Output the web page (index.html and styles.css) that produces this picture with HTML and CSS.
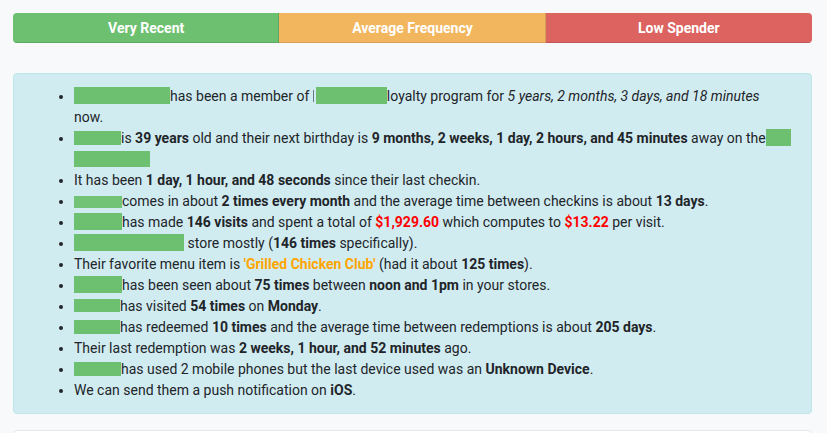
FILE: index.html
```html
<!DOCTYPE html>
<html lang="en">
<head>
<meta charset="utf-8">
<title>Customer Insights</title>
<link rel="stylesheet" href="styles.css">
</head>
<body>
<div class="page">
  <div class="progress">
    <div class="seg seg-green">Very Recent</div>
    <div class="seg seg-orange">Average Frequency</div>
    <div class="seg seg-red">Low Spender</div>
  </div>

  <div class="alert">
    <ul class="facts">
      <li><span class="r r96 h17"></span>has been a member of <span class="rem"></span><span class="r r71 h17"></span>loyalty program for <em>5 years, 2 months, 3 days, and 18 minutes</em> now.</li>
      <li><span class="r r47 h14"></span>is <b>39 years</b> old and their next birthday is <b>9 months, 2 weeks, 1 day, 2 hours, and 45 minutes</b> away on the<span class="r r25 h17"></span> <span class="r r76 h16"></span></li>
      <li>It has been <b>1 day, 1 hour, and 48 seconds</b> since their last checkin.</li>
      <li><span class="r r48 h12 light"></span>comes in about <b>2 times every month</b> and the average time between checkins is about <b>13 days</b>.</li>
      <li><span class="r r48 h17"></span>has made <b>146 visits</b> and spent a total of <b class="red">$1,929.60</b> which computes to <b class="red">$13.22</b> per visit.</li>
      <li><span class="r r110 h17"></span> store mostly (<b>146 times</b> specifically).</li>
      <li>Their favorite menu item is <b class="orange">'Grilled Chicken Club'</b> (had it about <b>125 times</b>).</li>
      <li><span class="r r48 h17"></span>has been seen about <b>75 times</b> between <b>noon and 1pm</b> in your stores.</li>
      <li><span class="r r46 h13"></span>has visited <b>54 times</b> on <b>Monday</b>.</li>
      <li><span class="r r46 h14"></span>has redeemed <b>10 times</b> and the average time between redemptions is about <b>205 days</b>.</li>
      <li>Their last redemption was <b>2 weeks, 1 hour, and 52 minutes</b> ago.</li>
      <li><span class="r r47 h14"></span>has used 2 mobile phones but the last device used was an <b>Unknown Device</b>.</li>
      <li>We can send them a push notification on <b>iOS</b>.</li>
    </ul>
  </div>

  <div class="card"></div>
</div>
</body>
</html>
```

FILE: styles.css
```css
html, body {
  margin: 0;
  padding: 0;
  background: #f8f9fb;
}

body {
  font-family: Roboto, "Liberation Sans", Arial, sans-serif;
  font-size: 14px;
  line-height: 21px;
  color: #212529;
}

.page {
  padding: 13px 15px 0 13px;
}

.progress {
  display: flex;
  height: 30px;
  border-radius: 4px;
  overflow: hidden;
  margin-bottom: 30px;
}

.seg {
  flex: 1 1 0;
  display: flex;
  align-items: center;
  justify-content: center;
  color: #ffffff;
  font-weight: 700;
  font-size: 14px;
  box-shadow: inset -1px -1px 0 rgba(0, 0, 0, 0.12);
}

.seg-green { background: #6cc070; }
.seg-orange { background: #f2b65e; }
.seg-red { background: #dc6360; box-shadow: inset 0 -1px 0 rgba(0, 0, 0, 0.12); }

.alert {
  background: #d1ecf1;
  border: 1px solid #bee5eb;
  border-radius: 4px;
  padding: 12px 20px;
}

.facts {
  margin: 0;
  padding-left: 40px;
}

.facts b { font-weight: 700; }
.facts em { font-style: italic; }

.red { color: #ff0000; }
.orange { color: #ffa500; }

.r {
  display: inline-block;
  background: #6cc070;
  vertical-align: -3px;
}
.r.light { background: #72c376; vertical-align: -2px; }

.h12 { height: 12px; vertical-align: -2px; }
.h13 { height: 13px; vertical-align: -1px; }
.h14 { height: 14px; vertical-align: -2px; }
.h16 { height: 16px; }
.h17 { height: 17px; }

.r25 { width: 25px; }
.r46 { width: 46px; }
.r47 { width: 47px; }
.r48 { width: 48px; }
.r71 { width: 71px; }
.r76 { width: 76px; }
.r96 { width: 96px; }
.r110 { width: 110px; }

.rem {
  display: inline-block;
  width: 1px;
  height: 12px;
  background: #6a7a80;
  margin-right: 2px;
  vertical-align: -1px;
}

.card {
  margin-top: 16px;
  height: 40px;
  background: #ffffff;
  border: 1px solid #e3e8ee;
  border-radius: 4px;
}
```
